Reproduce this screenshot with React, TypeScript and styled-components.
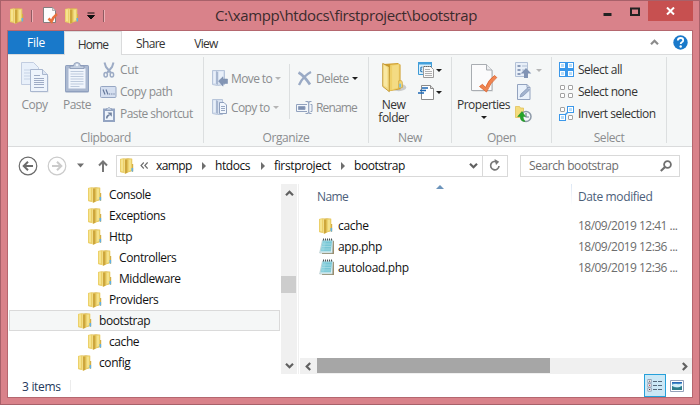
import React from 'react';
import styled, { createGlobalStyle } from 'styled-components';

const Global = createGlobalStyle`
  * { box-sizing: border-box; }
  body { margin: 0; overflow: hidden; background: #d9828a; }
`;

/* ---------- window frame ---------- */
const Frame = styled.div`
  width: 700px; height: 405px;
  display: flex; flex-direction: column;
  border: 1px solid #a8616a;
  background: #d9828a;
  font: 12px/20px "Open Sans", "Noto Sans", sans-serif;
  letter-spacing: -0.42px;
  color: #111;
  padding: 0 6px 6px;
  cursor: default;
  white-space: nowrap;
  svg { display: block; flex: none; }
`;
const TitleBar = styled.header`
  height: 29px; flex: none;
  display: grid; grid-template-columns: 205px 1fr 100px;
  padding-left: 3px;
`;
const QuickAccess = styled.div`
  display: flex; align-items: center;
`;
const QuickSeparator = styled.i<{ $left: number; $right: number }>`
  width: 2px; height: 12px; border-left: 1px solid #8f5c62; border-right: 1px solid #eeb0b5;
  margin: 0 ${p => p.$right}px 0 ${p => p.$left}px;
`;
const QuickItem = styled.span<{ $gap: number }>`
  margin-right: ${p => p.$gap}px;
`;
const Title = styled.h1`
  margin: 0; font-size: 15px; font-weight: 400; line-height: 29px; letter-spacing: -0.37px; color: #3b2b2d;
`;
const WindowButtons = styled.div`
  display: flex; height: 20px; justify-content: flex-end;
`;
const WindowButton = styled.button<{ $w: number; $close?: boolean }>`
  border: 0; padding: 0; width: ${p => p.$w}px; height: 20px;
  background: ${p => (p.$close ? '#c75050' : 'transparent')};
  display: grid; place-items: center; flex: none;
`;
const Client = styled.main`
  flex: 1; min-height: 0;
  border: 1px solid #b5676f;
  background: #fff;
  display: flex; flex-direction: column;
`;

/* ---------- ribbon ---------- */
const Tabs = styled.nav`
  display: flex; height: 24px; flex: none; border-bottom: 1px solid #dadbdc;
`;
const Tab = styled.div<{ $w: number; $kind?: 'file' | 'active' }>`
  width: ${p => p.$w}px; text-align: center; line-height: 26px; letter-spacing: -0.68px; color: #333;
  height: 24px;
  ${p => p.$kind === 'file' && 'background:#1979ca;color:#fff;height:23px;letter-spacing:-0.2px;line-height:24px;'}
  ${p => p.$kind === 'active' && 'background:#f5f7f7;border:1px solid #dadbdc;border-bottom:0;letter-spacing:-0.9px;'}
`;
const TabTools = styled.div`
  margin-left: auto; display: flex; align-items: center; gap: 14px; padding-right: 4px;
`;
const Ribbon = styled.section`
  height: 92px; flex: none; display: flex; background: #f5f7f7; border-bottom: 1px solid #dadbdc;
  padding: 2px 0 3px;
`;
const Group = styled.div<{ $w: number }>`
  width: ${p => p.$w}px; height: 86px; border-right: 1px solid #dcdfe0;
  display: flex; flex-direction: column;
`;
const GroupBody = styled.div`
  height: 70px; display: flex; padding-top: 2px;
`;
const GroupLabel = styled.div`
  text-align: center; color: #8b8d8f; line-height: 21px; height: 16px;
`;
const BigButton = styled.div<{ $w: number; $off?: boolean }>`
  width: ${p => p.$w}px; display: flex; flex-direction: column; align-items: center; flex: none;
  color: ${p => (p.$off ? '#8b8d8f' : '#333')}; line-height: 13px; text-align: center; letter-spacing: -0.5px;
`;
const BigIcon = styled.div`
  height: 39px; padding-top: 3px;
`;
const Caret = styled.i<{ $top?: number; $off?: boolean }>`
  border: 3px solid transparent; border-bottom: 0; width: 0; height: 0; flex: none;
  border-top-color: ${p => (p.$off ? '#b5b5b5' : '#1e1e1e')};
  margin-top: ${p => p.$top || 0}px;
`;
const Column = styled.div<{ $left?: number; $rule?: boolean; $w?: number }>`
  margin-left: ${p => p.$left || 0}px;
  ${p => p.$w && `width:${p.$w}px;`}
  ${p => p.$rule && 'border-right:1px solid #dcdfe0;margin-top:5px;height:55px;'}
`;
const Command = styled.div<{ $h?: number; $off?: boolean; $gap?: number; $track?: number }>`
  height: ${p => p.$h || 22}px; display: flex; align-items: center; gap: ${p => p.$gap ?? 3}px;
  color: ${p => (p.$off ? '#8b8d8f' : '#333')};
  letter-spacing: ${p => p.$track ?? -0.5}px;
`;
const IconCell = styled.span`
  width: 17px; display: grid; place-items: center; flex: none;
`;

/* ---------- address row ---------- */
const AddressRow = styled.div`
  height: 37px; flex: none; display: flex; align-items: center; padding: 0 12px 0 10px;
`;
const NavButtons = styled.div`
  width: 98px; display: flex; align-items: center; flex: none;
`;
const NavGap = styled.i<{ $w: number }>`
  width: ${p => p.$w}px;
`;
const AddressBox = styled.div`
  width: 392px; height: 22px; border: 1px solid #d9d9d9; display: flex; align-items: center; padding-left: 3px;
`;
const Crumb = styled.span<{ $w: number; $track?: number }>`
  width: ${p => p.$w}px; letter-spacing: ${p => p.$track ?? -0.45}px;
`;
const CrumbArrow = styled.i`
  border: 4px solid transparent; border-left-color: #6e6e6e; border-right: 0; margin-right: 9px;
`;
const AddressEnd = styled.div`
  margin-left: auto; display: flex; height: 20px; align-items: center;
`;
const Refresh = styled.div`
  width: 25px; height: 20px; border-left: 1px solid #d9d9d9; display: grid; place-items: center;
`;
const SearchBox = styled.div`
  width: 160px; height: 22px; border: 1px solid #d9d9d9; margin-left: 12px; color: #6d6d6d;
  display: flex; align-items: center; justify-content: space-between; padding: 0 7px 0 8px;
`;

/* ---------- body ---------- */
const Body = styled.div`
  height: 190px; flex: none; display: grid; grid-template-columns: 273px 16px 3px 392px;
`;
const Tree = styled.div``;
const TreeRow = styled.div<{ $depth: number; $selected?: boolean }>`
  height: 21px; display: flex; align-items: center; gap: 7px; margin: 0 1px;
  border: 1px solid ${p => (p.$selected ? '#dadada' : 'transparent')};
  background: ${p => (p.$selected ? '#f5f7f7' : 'transparent')};
  padding-left: ${p => 68 + p.$depth * 10}px;
`;
const VScroll = styled.div`
  background: #f0f0f0; display: flex; flex-direction: column; align-items: center; padding: 5px 0 4px;
`;
const VThumb = styled.div`
  width: 15px; height: 17px; background: #cdcdcd; margin: 78px 1px auto 0;
`;
const Splitter = styled.div`
  width: 2px; border-right: 1px solid #f0f0f0;
`;
const Files = styled.div`
  display: flex; flex-direction: column;
`;
const Header = styled.div`
  height: 31px; display: grid; grid-template-columns: 271px 1fr; color: #4c607a; line-height: 26px;
`;
const NameHead = styled.div`
  padding-left: 17px; display: flex; letter-spacing: -0.6px;
`;
const SortMark = styled.i`
  border: 4px solid transparent; border-top: 0; border-bottom-color: #6c94bb; height: 0; margin: 1px 0 0 88px;
`;
const DateHead = styled.div`
  border-left: 1px solid; border-image: linear-gradient(#dbe6f4, #fff 70%) 1; padding-left: 6px; letter-spacing: -0.38px;
`;
const FileRow = styled.div`
  height: 21px; display: grid; grid-template-columns: 19px 240px 1fr; padding-left: 19px; align-items: center;
`;
const FileDate = styled.span`
  color: #6d6d6d; letter-spacing: -0.53px;
`;
const FileName = styled.span<{ $track?: number }>`
  letter-spacing: ${p => p.$track ?? -0.35}px;
`;
const HScroll = styled.div`
  margin-top: auto; height: 16px; background: #f0f0f0; display: grid; grid-template-columns: 17px 233px 1fr 16px;
`;
const HThumb = styled.div`
  height: 15px; background: #a6a6a6; grid-column: 2;
`;
const ScrollArrow = styled.div<{ $right?: boolean }>`
  display: grid; place-items: center; grid-column: ${p => (p.$right ? 4 : 1)}; grid-row: 1;
`;
const Status = styled.footer`
  flex: 1; display: flex; align-items: center; color: #24395c; padding-left: 14px;
`;
const Count = styled.span`
  width: 49px; height: 12px; line-height: 13px; border-right: 1px solid #ececec; letter-spacing: -0.3px;
`;
const ViewButtons = styled.div`
  margin-left: auto; display: flex; height: 23px; align-items: center; padding-right: 7px; gap: 3px;
`;
const ViewButton = styled.div<{ $on?: boolean }>`
  width: ${p => (p.$on ? 22 : 16)}px; height: 23px; display: grid; place-items: center;
  ${p => p.$on && 'border:1px solid #26a0da;background:#cbe8f6;'}
`;

/* ---------- icons ---------- */
const FolderIcon = () => (
  <svg width="14" height="16" viewBox="0 0 14 16">
    <path d="M0 1 8 .3l4 .5V13l-6 2L0 14z" fill="#dcb94f" />
    <path d="M0 1 4.500.300V15L0 14z" fill="#ecd06a" />
    <path d="M1 1.500 3 1.200V13.500L1 13z" fill="#f6e48f" />
    <path d="M4 1 7 2v13l-2 .8L4 15z" fill="#f2dc86" />
    <path d="M5 1.500V15.800L7.500 14.800V2z" fill="#cda63c" />
    <path d="M7.500 1 12.300.800v12L7.500 14.500z" fill="#e9cd66" />
    <path d="M8.700 1.800 11 1.600V12l-2.300 1z" fill="#f4e28c" />
    <path d="M12 6h1.200v7.500L12 14z" fill="#d3ae46" />
    <path d="M11.500 10h1.600v3.500h-1.600z" fill="#5fb0e6" />
  </svg>
);
const BigFolderIcon = () => (
  <svg width="28" height="32" viewBox="0 0 28 34">
    <ellipse cx="19" cy="27" rx="8" ry="4" fill="#bfc0bf" opacity=".8" />
    <path d="M3 2 18 1l3 2v26l-12 2z" fill="#cf9f30" />
    <path d="M10 3 20 2v26L8 31z" fill="#efd06a" />
    <path d="M12 4 19 3v24l-7 2z" fill="#f4db83" />
    <path d="M2 1.500 9 5v26.500L2 26z" fill="#f2d980" stroke="#bd9029" strokeWidth=".9" />
    <path d="m3 3 4 3v21l-4-2z" fill="#f9e8a2" />
    <path d="M19 20c4-1 4 1 4 4v3l-4 1z" fill="#f2d575" stroke="#c99f35" strokeWidth=".7" />
    <path d="M20.500 23v4" stroke="#79bfe0" strokeWidth="2" />
  </svg>
);
const SmallPage = () => (
  <svg width="15" height="17" viewBox="0 0 15 17">
    <path d="M.5.500H9.500l3 3v12H.5z" fill="#fdfdfd" stroke="#777" strokeWidth=".9" />
    <path d="M9.500.500v3h3" fill="#ddd" stroke="#999" strokeWidth=".7" />
    <path d="M5.500 11.500 8.500 14.500Q10 10 14 7" fill="none" stroke="#e8713d" strokeWidth="2.600" />
  </svg>
);
const BigPage = () => (
  <svg width="28" height="32" viewBox="0 0 28 32">
    <path d="M2.500 3H17l6 6v20.500H2.500z" fill="#d8dada" />
    <path d="M1.500 2.500H16.500l5.500 5.500V28.500H1.500z" fill="#fbfbfc" stroke="#a9adb2" />
    <path d="M16.500 2.500V8H22" fill="#eceef0" stroke="#a9adb2" />
    <path d="m9.500 24.500 3-2.200 3 3.200Q18.500 17.500 24.500 13.500l2.300 2Q20 21 16.500 30z" fill="#f08450" stroke="#d9622d" strokeWidth=".8" />
  </svg>
);
const CopyIcon = () => (
  <svg width="28" height="32" viewBox="0 0 28 32">
    <path d="M.5.500H12.500l5 5v17H.5z" fill="#e8f0fa" stroke="#c2cde0" />
    <path d="M3 8h9M3 11h6M3 14h6M3 17h6" stroke="#c6d3e6" />
    <path d="M10.500 8.500H22L27.500 14V30.500H10.500z" fill="#d9dde3" />
    <path d="M9.500 7.500H21.500l5 5V29.500H9.500z" fill="#eef4fc" stroke="#a9b7cf" />
    <path d="M21.500 7.500v5h5" fill="#dde6f3" stroke="#a9b7cf" />
    <path d="M13 13.500h6M13 16.500h10M13 18.500h10M13 20.500h10M13 22.500h10M13 25.500h10" stroke="#9eabc5" />
  </svg>
);
const PasteIcon = () => (
  <svg width="26" height="32" viewBox="0 0 26 32">
    <rect x="1" y="3" width="24" height="27.500" rx="1.500" fill="#8fa0be" />
    <rect x="2" y="4" width="22" height="25" fill="#aab8d0" />
    <path d="M4.500 6.500h17v20h-17z" fill="#f0f5fc" />
    <path d="M6.500 9.500h13M6.500 12h13M6.500 14.500h13M6.500 17h13M6.500 19.500h13M6.500 22h13M6.500 24.500h9" stroke="#bdcadd" />
    <path d="M6 6.500V4h3.500Q9.500.500 13 .500T16.500 4H20v2.500z" fill="#c3cfe0" stroke="#8595b3" strokeWidth=".8" />
    <circle cx="13" cy="3" r="1.200" fill="#eef3fa" />
  </svg>
);
const CutIcon = () => (
  <svg width="12" height="16" viewBox="0 0 12 16" fill="none" stroke="#9cabc5">
    <path d="M1.500.500 3 5l5 6M10.500.500 9 5l-5 6" strokeWidth="2" />
    <ellipse cx="2.700" cy="12.700" rx="1.700" ry="2.300" strokeWidth="1.500" />
    <ellipse cx="8.900" cy="12.700" rx="1.700" ry="2.300" strokeWidth="1.500" />
  </svg>
);
const CopyPathIcon = () => (
  <svg width="17" height="12" viewBox="0 0 17 12">
    <rect x=".5" y=".5" width="15.500" height="11" rx="1" fill="#d5dff0" stroke="#96a6c3" />
    <path d="m3 3.500 2 5M6 3.500l2 5" stroke="#66799b" strokeWidth="1.200" />
    <path d="M9 8h1.200M11.200 8h1.200M13.400 8h1.200" stroke="#66799b" strokeWidth="1.200" />
  </svg>
);
const ShortcutIcon = () => (
  <svg width="12" height="15" viewBox="0 0 12 15">
    <rect y="1.500" width="12" height="13.500" fill="#93a4c2" />
    <rect x="2" y="4" width="8" height="9" fill="#eef4fb" />
    <path d="M3.500 3V1.500h1Q6-.7 7.500 1.500h1V3z" fill="#d4deec" stroke="#8899b7" strokeWidth=".7" />
    <path d="M3.700 11.500Q3.700 8.500 6.500 8" fill="none" stroke="#71829f" strokeWidth="1.500" />
    <path d="M4.500 5.500h4.300v4.300z" fill="#71829f" />
  </svg>
);
const MoveIcon = () => (
  <svg width="16" height="17" viewBox="0 0 16 17">
    <path d="M.5.500h12v14l-7 1-5-1z" fill="#d7e1f0" stroke="#b7c5da" />
    <path d="M4 1l2 1v13l-2-1z" fill="#a8b7d0" />
    <path d="M1.500 1.500h2V13h-2zM7 1.500h4V12H7z" fill="#e9f0f9" />
    <path d="m6.500 11 4.500-4.200V9h4.500v4.500H11v2.700z" fill="#8395b4" stroke="#7588aa" strokeWidth=".5" />
  </svg>
);
const CopyToIcon = () => (
  <svg width="16" height="17" viewBox="0 0 16 17">
    <path d="M.5.500h10v15h-5l-5-1z" fill="#d7e1f0" stroke="#b7c5da" />
    <path d="M4 1l2 1v13l-2-1z" fill="#a8b7d0" />
    <path d="M1.500 1.500h2V13h-2z" fill="#e9f0f9" />
    <path d="M7.500 3.500h4.500l2.500 2.500v8.500h-7z" fill="#f2f7fd" stroke="#8fa0bd" />
    <path d="M9 7.500h4M9 9.500h4M9 11.500h4" stroke="#97a7c1" />
  </svg>
);
const DeleteIcon = () => (
  <svg width="15" height="15" viewBox="0 0 15 15" fill="none" stroke="#9aaac5">
    <path d="M1.500 1.500Q7 4.500 13 13.500" strokeWidth="2.700" />
    <path d="M14 1Q6 5 2 14" strokeWidth="2.300" />
  </svg>
);
const RenameIcon = () => (
  <svg width="17" height="13" viewBox="0 0 17 13" fill="none" stroke="#92a2be">
    <path d="M11 3.500H.5v7H11M14.500 3.500h1.500v7h-1.500" fill="#f2f6fb" />
    <path d="M2.500 5.500h6.500v3H2.500z" fill="#7e90b0" />
    <path d="M9.500.500h2l1.200 1 1.200-1H15.500M9.500 12.500h2l1.200-1 1.200 1h1.600M12.700 1.500v10" strokeWidth="1.200" />
  </svg>
);
const NewItemIcon = () => (
  <svg width="17" height="17" viewBox="0 0 17 17">
    <path d="M.5.500h13v12H.5z" fill="#d9effb" stroke="#3d9ad6" />
    <path d="M0 0h14v2.500H0z" fill="#43a0dc" />
    <path d="M4.500 5Q2 5 3.200 7.200 1.500 9.500 4.500 10" fill="none" stroke="#2d78b5" strokeWidth="1.200" />
    <path d="M5.500 4.500h7l3 3v8h-10z" fill="#fafafa" stroke="#9a9a9a" />
    <path d="M6 4.500h7" stroke="#666" strokeDasharray="1 1" />
    <path d="M7 7.500h5M7 9.500h7M7 11.500h7M7 13.500h7" stroke="#b0b0b0" />
  </svg>
);
const EasyAccessIcon = () => (
  <svg width="17" height="17" viewBox="0 0 17 17">
    <path d="M3.500 1.500h9l3 3v11h-12z" fill="#fff" stroke="#8b8b8b" />
    <path d="M12.500 1.500v3h3" fill="#ddd" stroke="#8b8b8b" />
    <path d="M4 4h6M2 6.500h6M0 9h6" stroke="#1c68b5" strokeWidth="1.300" />
  </svg>
);
const OpenIcon = () => (
  <svg width="17" height="17" viewBox="0 0 17 17">
    <path d="M.5.500h12v14H.5z" fill="#e8eff8" stroke="#b3c1d7" />
    <path d="M2.500 3h3v2h-3zM2.500 7h3v2h-3zM2.500 11h3v2h-3z" fill="#8b9cb9" />
    <path d="M7 4h5M7 8h2" stroke="#aebdd3" />
    <path d="m11 6 5.300 5.500H13V16H9v-4.500H5.700z" fill="#8294b4" />
  </svg>
);
const EditIcon = () => (
  <svg width="14" height="16" viewBox="0 0 14 16">
    <path d="M.5.500h9.500l3 3v12H.5z" fill="#e9f1fb" stroke="#93a3bf" />
    <path d="M10 .500v3h3" fill="none" stroke="#93a3bf" />
    <path d="m3 13 1-3L10.500 4l2 2L6 12z" fill="#a2b3cf" stroke="#8193b3" strokeWidth=".7" />
  </svg>
);
const HistoryIcon = () => (
  <svg width="17" height="17" viewBox="0 0 17 17">
    <path d="M.5.500h4l1 1.500h3v9.500h-8z" fill="#f4dc7d" stroke="#dfbd4d" strokeWidth=".7" />
    <circle cx="11" cy="10.500" r="5" fill="#f4f7fa" stroke="#8e9aa8" strokeWidth="1.500" />
    <path d="M11 7v4h3" fill="none" stroke="#71808f" strokeWidth="1.200" />
    <path d="M10 15.500Q5 15.500 5.500 10.500H2.700L7 5.500l3.500 5H8q0 2.500 2 5" fill="#25a52a" stroke="#168a1e" strokeWidth=".5" />
  </svg>
);
type SelectKind = 'all' | 'none' | 'invert';
const SelectIcon = ({ kind }: { kind: SelectKind }) => (
  <svg width="16" height="16" viewBox="0 0 16 16">
    {kind === 'all' && <rect width="15" height="15" fill="#3b98ea" />}
    {[0, 1, 2, 3].map(i => {
      const x = (i % 2) * 8, y = Math.floor(i / 2) * 8;
      const on = kind === 'all' || (kind === 'invert' && (i === 1 || i === 2));
      return on ? (
        <g key={i}>
          <rect x={x} y={y} width="7" height="7" fill="#3b98ea" />
          <rect x={x + 1.5} y={y + 1.5} width="4" height="4" fill="#b5dcfa" stroke="#fff" />
        </g>
      ) : (
        <rect key={i} x={x + 1.5} y={y + 1.5} width="4" height="4" rx=".4" fill="#fff" stroke="#a2a2a2" />
      );
    })}
    {kind === 'invert' && <path d="M6.500 8.500 8.500 6.500" stroke="#3b98ea" strokeWidth="1.500" />}
  </svg>
);
const NotepadIcon = () => (
  <svg width="16" height="17" viewBox="0 0 16 17">
    <path d="M4 3h11v13H3z" fill="#9c8d6c" />
    <path d="M3.500 2H14l-.7 13H.7z" fill="#e9f4f5" stroke="#9bb9be" strokeWidth=".6" />
    <path d="M3.700 2.500h9.500L12 13.500H1.500z" fill="#8bd0dd" />
    <path d="M7 4h5.500l-.8 8.500H5z" fill="#69bdcd" opacity=".55" />
    <path d="M3.300 6h9M3 8.500h9M2.500 11h9" stroke="#b6e3ea" strokeWidth=".6" />
    <path d="M4 1.500h10" stroke="#4b5558" strokeWidth="2" strokeDasharray="1 1" />
  </svg>
);
const ArrowCircle = ({ color, back }: { color: string; back?: boolean }) => (
  <svg width="20" height="20" viewBox="0 0 20 20" fill="none" stroke={color}>
    <circle cx="10" cy="10" r="8.800" strokeWidth="1.200" />
    {back ? <path d="M15 10H6M10 5.700 5.700 10 10 14.300" strokeWidth="2" /> : <path d="M5 10h9M10 5.700 14.300 10 10 14.300" strokeWidth="2" />}
  </svg>
);
const Chevron = ({ d, color = '#606060' }: { d: string; color?: string }) => (
  <svg width="9" height="9" viewBox="0 0 9 9" fill="none" stroke={color} strokeWidth="2.200"><path d={d} /></svg>
);
const UP = 'M1 6.200 4.500 2.700 8 6.200';
const DOWN = 'M1 2.800 4.500 6.300 8 2.800';

const tree: [string, number][] = [
  ['Console', 1], ['Exceptions', 1], ['Http', 1], ['Controllers', 2], ['Middleware', 2],
  ['Providers', 1], ['bootstrap', 0], ['cache', 1], ['config', 0],
];

export default function App() {
  return (
    <Frame>
      <Global />
      <TitleBar>
        <QuickAccess>
          <FolderIcon />
          <QuickSeparator $left={7} $right={10} />
          <QuickItem $gap={7}><SmallPage /></QuickItem>
          <QuickItem $gap={8}><FolderIcon /></QuickItem>
          <svg width="8" height="8" viewBox="0 0 8 8"><path d="M.500 1h7M.500 3.500h7L4 7z" stroke="#111" strokeWidth="1" fill="#111" /></svg>
          <QuickSeparator $left={8} $right={0} />
        </QuickAccess>
        <Title>C:\xampp\htdocs\firstproject\bootstrap</Title>
        <WindowButtons>
          <WindowButton $w={27}><svg width="9" height="20"><path d="M.500 12h8v3h-8z" fill="#222" /></svg></WindowButton>
          <WindowButton $w={27}><svg width="10" height="20"><path d="M1 7.500h8v6.500H1z" fill="none" stroke="#222" strokeWidth="2" /></svg></WindowButton>
          <WindowButton $w={45} $close><svg width="9" height="8"><path d="m1 .500 7 7m0-7-7 7" stroke="#fff" strokeWidth="2" /></svg></WindowButton>
        </WindowButtons>
      </TitleBar>
      <Client>
        <Tabs>
          <Tab $w={56} $kind="file">File</Tab>
          <Tab $w={58} $kind="active">Home</Tab>
          <Tab $w={57}>Share</Tab>
          <Tab $w={54}>View</Tab>
          <TabTools>
            <Chevron d={UP} color="#8b8b8b" />
            <svg width="15" height="15" viewBox="0 0 15 15">
              <circle cx="7.500" cy="7.500" r="7.200" fill="#1979ca" />
              <path d="M4.800 5.500Q5 3 7.600 3 10.200 3 10.200 5.200 10.200 6.500 8.800 7.200 7.700 7.900 7.700 9" fill="none" stroke="#fff" strokeWidth="1.800" />
              <circle cx="7.700" cy="11.500" r="1.200" fill="#fff" />
            </svg>
          </TabTools>
        </Tabs>
        <Ribbon>
          <Group $w={196}>
            <GroupBody>
              <Column $left={5} />
              <BigButton $w={43} $off><BigIcon><CopyIcon /></BigIcon>Copy</BigButton>
              <BigButton $w={42} $off><BigIcon><PasteIcon /></BigIcon>Paste</BigButton>
              <Column $left={2}>
                <Command $off $track={-0.3}><IconCell><CutIcon /></IconCell>Cut</Command>
                <Command $off><IconCell><CopyPathIcon /></IconCell>Copy path</Command>
                <Command $off $track={-0.57}><IconCell><ShortcutIcon /></IconCell>Paste shortcut</Command>
              </Column>
            </GroupBody>
            <GroupLabel>Clipboard</GroupLabel>
          </Group>
          <Group $w={165}>
            <GroupBody>
              <Column $left={7} $w={79} $rule>
                <Command $h={29} $off $track={-0.6}><IconCell><MoveIcon /></IconCell>Move to<Caret $off /></Command>
                <Command $h={29} $off $track={-0.6}><IconCell><CopyToIcon /></IconCell>Copy to<Caret $off /></Command>
              </Column>
              <Column $left={6}>
                <Command $h={39} $off $track={-0.6}><IconCell><DeleteIcon /></IconCell>Delete<Caret /></Command>
                <Command $h={19} $off $track={-0.85}><IconCell><RenameIcon /></IconCell>Rename</Command>
              </Column>
            </GroupBody>
            <GroupLabel>Organize</GroupLabel>
          </Group>
          <Group $w={83}>
            <GroupBody>
              <BigButton $w={49}><BigIcon><BigFolderIcon /></BigIcon><span>New</span><span>folder</span></BigButton>
              <Column>
                <Command $gap={1}><IconCell><NewItemIcon /></IconCell><Caret /></Command>
                <Command $gap={1}><IconCell><EasyAccessIcon /></IconCell><Caret /></Command>
              </Column>
            </GroupBody>
            <GroupLabel>New</GroupLabel>
          </Group>
          <Group $w={100}>
            <GroupBody>
              <BigButton $w={63}><BigIcon><BigPage /></BigIcon>Properties<Caret $top={5} /></BigButton>
              <Column>
                <Command $gap={4}><IconCell><OpenIcon /></IconCell><Caret $off /></Command>
                <Command><IconCell><EditIcon /></IconCell></Command>
                <Command><IconCell><HistoryIcon /></IconCell></Command>
              </Column>
            </GroupBody>
            <GroupLabel>Open</GroupLabel>
          </Group>
          <Group $w={115}>
            <GroupBody>
              <Column $left={6}>
                <Command><IconCell><SelectIcon kind="all" /></IconCell>Select all</Command>
                <Command><IconCell><SelectIcon kind="none" /></IconCell>Select none</Command>
                <Command><IconCell><SelectIcon kind="invert" /></IconCell>Invert selection</Command>
              </Column>
            </GroupBody>
            <GroupLabel>Select</GroupLabel>
          </Group>
        </Ribbon>
        <AddressRow>
          <NavButtons>
            <ArrowCircle color="#6b6b6b" back />
            <NavGap $w={9} />
            <ArrowCircle color="#cbcbcb" />
            <NavGap $w={10} />
            <svg width="7" height="5"><path d="M0 .500h7L3.500 4.500z" fill="#6f6f6f" /></svg>
            <NavGap $w={14} />
            <svg width="10" height="12" viewBox="0 0 10 12" fill="none" stroke="#777" strokeWidth="2"><path d="M5 12V2M1 5.500 5 1.500 9 5.500" /></svg>
          </NavButtons>
          <AddressBox>
            <FolderIcon />
            <NavGap $w={6} />
            <svg width="8" height="7" viewBox="0 0 8 7" fill="none" stroke="#6b6b6b" strokeWidth="1.100"><path d="M3.800.500 1 3.500l2.800 3M7.600.500 4.800 3.500l2.800 3" /></svg>
            <NavGap $w={8} />
            <Crumb $w={46} $track={-0.6}>xampp</Crumb><CrumbArrow />
            <Crumb $w={46}>htdocs</Crumb><CrumbArrow />
            <Crumb $w={67} $track={-0.36}>firstproject</Crumb><CrumbArrow />
            <Crumb $w={60}>bootstrap</Crumb>
            <AddressEnd>
              <Chevron d={DOWN} />
              <NavGap $w={4} />
              <Refresh>
                <svg width="12" height="13" viewBox="0 0 12 13" fill="none" stroke="#777" strokeWidth="1.700"><path d="M8.500 3.400A4.200 4.200 0 1 0 10 7" /><path d="M5.500 0 10.200 2.800 7 6z" fill="#777" stroke="none" /></svg>
              </Refresh>
            </AddressEnd>
          </AddressBox>
          <SearchBox>
            Search bootstrap
            <svg width="12" height="12" viewBox="0 0 12 12" fill="none" stroke="#6f6f6f"><circle cx="7.500" cy="4.500" r="3.400" strokeWidth="1.800" /><path d="M5 7 .800 11" strokeWidth="2.200" /></svg>
          </SearchBox>
        </AddressRow>
        <Body>
          <Tree>
            {tree.map(([name, depth], i) => (
              <TreeRow key={i} $depth={depth} $selected={i === 6}><FolderIcon />{name}</TreeRow>
            ))}
          </Tree>
          <VScroll>
            <Chevron d={UP} />
            <VThumb />
            <Chevron d={DOWN} />
          </VScroll>
          <Splitter />
          <Files>
            <Header>
              <NameHead>Name<SortMark /></NameHead>
              <DateHead>Date modified</DateHead>
            </Header>
            <FileRow><FolderIcon /><FileName $track={-0.3}>cache</FileName><FileDate>18/09/2019 12:41 ...</FileDate></FileRow>
            <FileRow><NotepadIcon /><FileName>app.php</FileName><FileDate>18/09/2019 12:36 ...</FileDate></FileRow>
            <FileRow><NotepadIcon /><FileName>autoload.php</FileName><FileDate>18/09/2019 12:36 ...</FileDate></FileRow>
            <HScroll>
              <ScrollArrow><Chevron d="M6.200 1 2.700 4.500 6.200 8" /></ScrollArrow>
              <HThumb />
              <ScrollArrow $right><Chevron d="M2.800 1 6.300 4.500 2.800 8" /></ScrollArrow>
            </HScroll>
          </Files>
        </Body>
        <Status>
          <Count>3 items</Count>
          <ViewButtons>
            <ViewButton $on>
              <svg width="16" height="13" viewBox="0 0 16 13">
                <path d="M.8.500h3.500v3.300H.8zM.8 4.700h3.500V8H.8zM.8 8.900h3.500v3.300H.8z" fill="#fff" stroke="#8592a8" strokeWidth=".8" />
                <path d="M2 2.200h1.200M2 10.500h1.200" stroke="#444" />
                <path d="M2 6.300h1.200" stroke="#c22" />
                <path d="M6 2.500h4M11 2.500h4M6 6.500h4M11 6.500h4M6 10.500h4M11 10.500h4" stroke="#55697c" />
              </svg>
            </ViewButton>
            <ViewButton>
              <svg width="14" height="12" viewBox="0 0 14 12">
                <path d="M.5.500h13v11H.5z" fill="#fff" stroke="#94a1b9" />
                <path d="M2 2h10v8H2z" fill="#5aaedc" />
                <path d="M2 5q3-2 5-1t5-1v3L8 8 2 6z" fill="#d5eef8" />
                <path d="M2 6q4 3 10 0v4H2z" fill="#2e7c8a" />
                <path d="M2 2h10v1.500H2z" fill="#2867b5" />
              </svg>
            </ViewButton>
          </ViewButtons>
        </Status>
      </Client>
    </Frame>
  );
}
